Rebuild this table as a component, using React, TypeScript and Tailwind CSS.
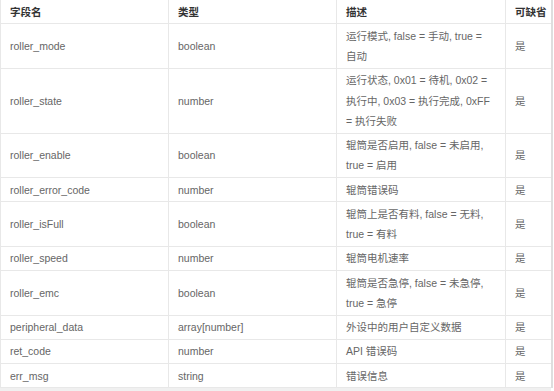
const ROWS = [
  { name: 'roller_mode', type: 'boolean', desc: '运行模式, false = 手动, true =\n自动', opt: '是' },
  { name: 'roller_state', type: 'number', desc: '运行状态, 0x01 = 待机, 0x02 = 执行中, 0x03 = 执行完成, 0xFF = 执行失败', opt: '是' },
  { name: 'roller_enable', type: 'boolean', desc: '辊筒是否启用, false = 未启用, true = 启用', opt: '是' },
  { name: 'roller_error_code', type: 'number', desc: '辊筒错误码', opt: '是' },
  { name: 'roller_isFull', type: 'boolean', desc: '辊筒上是否有料, false = 无料, true = 有料', opt: '是' },
  { name: 'roller_speed', type: 'number', desc: '辊筒电机速率', opt: '是' },
  { name: 'roller_emc', type: 'boolean', desc: '辊筒是否急停, false = 未急停, true = 急停', opt: '是' },
  { name: 'peripheral_data', type: 'array[number]', desc: '外设中的用户自定义数据', opt: '是' },
  { name: 'ret_code', type: 'number', desc: 'API 错误码', opt: '是' },
  { name: 'err_msg', type: 'string', desc: '错误信息', opt: '是' },
];

const cell = 'border border-[#e8e8e8] px-[9px] py-[1.5px] leading-[20.25px] align-middle text-left';

export default function App() {
  return (
    <div
      className="w-[554px] h-[391px] bg-white overflow-hidden"
      style={{ fontFamily: '"Liberation Sans", Arial, "Noto Sans CJK SC", sans-serif' }}
    >
      <div className="w-[553px] h-[388px] overflow-hidden border-r-2 border-[#dedede]">
        <table className="table-fixed border-collapse w-[620px] text-[10.5px] text-[#666]">
          <colgroup>
            <col className="w-[168px]" />
            <col className="w-[168px]" />
            <col className="w-[169px]" />
            <col className="w-[115px]" />
          </colgroup>
          <thead>
            <tr>
              {['字段名', '类型', '描述', '可缺省'].map((h) => (
                <th key={h} className={`${cell} border-t-0 font-bold text-[#333]`}>
                  {h}
                </th>
              ))}
            </tr>
          </thead>
          <tbody>
            {ROWS.map((r) => (
              <tr key={r.name}>
                <td className={cell}>{r.name}</td>
                <td className={cell}>{r.type}</td>
                <td className={`${cell} whitespace-pre-line`}>{r.desc}</td>
                <td className={cell}>{r.opt}</td>
              </tr>
            ))}
          </tbody>
        </table>
      </div>
      <div className="h-[3px] w-[551px] bg-[#f0f0f0]" />
    </div>
  );
}
